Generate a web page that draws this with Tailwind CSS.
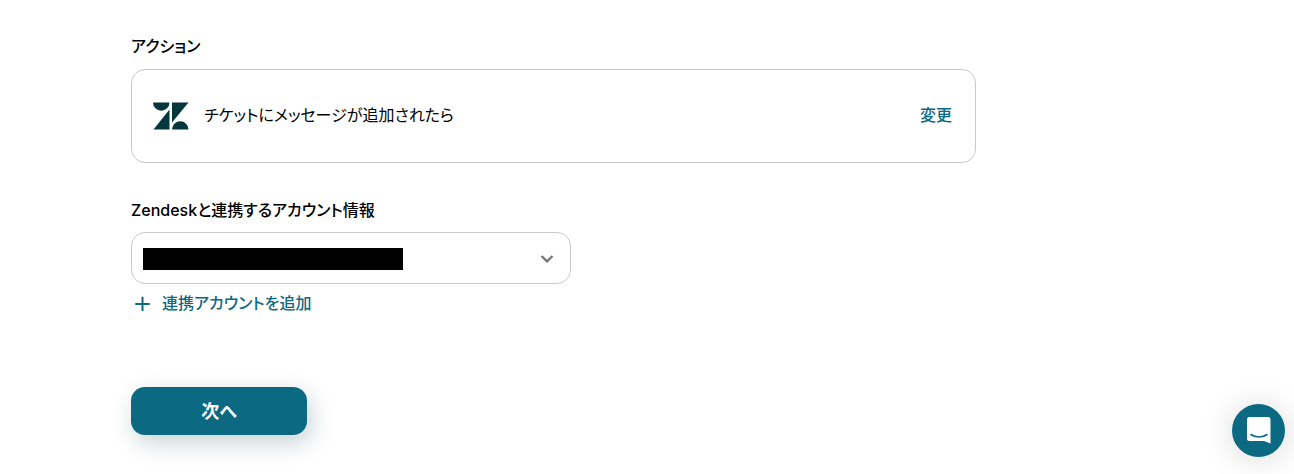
<!DOCTYPE html>
<html lang="ja">
<head>
<meta charset="utf-8">
<meta name="viewport" content="width=device-width, initial-scale=1">
<title>アクション設定</title>
<script src="https://cdn.jsdelivr.net/npm/@tailwindcss/browser@4"></script>
</head>
<body class="bg-white text-black font-['Inter','Noto_Sans_CJK_JP',sans-serif] [font-feature-settings:'palt'] text-base">
<main class="mx-4 max-w-[845px] pt-[34px] pb-8 md:ml-[131px]">
  <section>
    <h2 class="font-medium leading-6">アクション</h2>
    <div class="mt-[11px] flex min-h-[94px] items-center rounded-[14px] border border-[#c8c8c8] pr-[23px] pl-[21px]">
      <svg class="h-7 w-9 shrink-0" viewBox="0 0 36 28" fill="#03363d" aria-hidden="true">
        <path d="M0 .5h16.500a8.250 8.200 0 0 1-16.500 0zM16.500 7.500v20H.5zM19 .5h16.500L19 20.500zM19 27.500a8.250 8.200 0 0 1 16.500 0z"/>
      </svg>
      <p class="ml-[15px] flex-1 pb-0.5 leading-6">チケットにメッセージが追加されたら</p>
      <button type="button" class="cursor-pointer pb-0.5 font-medium leading-6 text-[#0b6982]">変更</button>
    </div>
  </section>

  <section class="mt-[35px]">
    <label for="account" class="block font-medium leading-6">Zendeskと連携するアカウント情報</label>
    <div class="relative mt-[10px] max-w-[440px]">
      <select id="account" class="block h-[52px] w-full appearance-none rounded-[14px] border border-[#c8c8c8] bg-white px-3">
        <option></option>
      </select>
      <span class="pointer-events-none absolute top-4 left-3 h-[22px] w-[260px] bg-black"></span>
      <svg class="pointer-events-none absolute top-5 right-[17px] size-[14px]" viewBox="0 0 14 14" fill="none" stroke="#757575" stroke-width="2.300" aria-hidden="true">
        <path d="M1.500 4l5.500 5.300L12.500 4"/>
      </svg>
    </div>
    <button type="button" class="mt-[7px] flex cursor-pointer items-center gap-3 pl-1 font-medium leading-6 text-[#0b6982]">
      <svg class="size-[15px]" viewBox="0 0 15 15" fill="none" stroke="currentColor" stroke-width="2" stroke-linecap="round" aria-hidden="true">
        <path d="M7.500 1.500v13M1 8h13"/>
      </svg>
      連携アカウントを追加
    </button>
  </section>

  <button type="button" class="mt-[72px] flex h-12 w-44 cursor-pointer items-center justify-center rounded-[14px] bg-[#0b6982] pt-0.5 text-lg font-bold text-white shadow-[4px_8px_24px_rgba(20,45,65,0.22)]">次へ</button>
</main>

<button type="button" aria-label="チャットを開く" class="fixed right-[9px] bottom-[17px] flex size-[53px] cursor-pointer items-center justify-center rounded-full bg-[#0b6982] shadow-[0_2px_32px_rgba(0,0,0,0.16)]">
  <svg class="h-[27px] w-6" viewBox="0 0 24 27" aria-hidden="true">
    <path fill="#fff" d="M2.500 0h19A2.500 2.500 0 0 1 23.500 2.500v24L17 24H2.500a2.500 2.500 0 0 1-2.500-2.500V2.500A2.500 2.500 0 0 1 2.500 0z"/>
    <path fill="none" stroke="#0b6982" stroke-width="1.600" stroke-linecap="round" d="M4 17.500c4.500 3.400 11.500 3.400 16 0"/>
  </svg>
</button>
</body>
</html>
